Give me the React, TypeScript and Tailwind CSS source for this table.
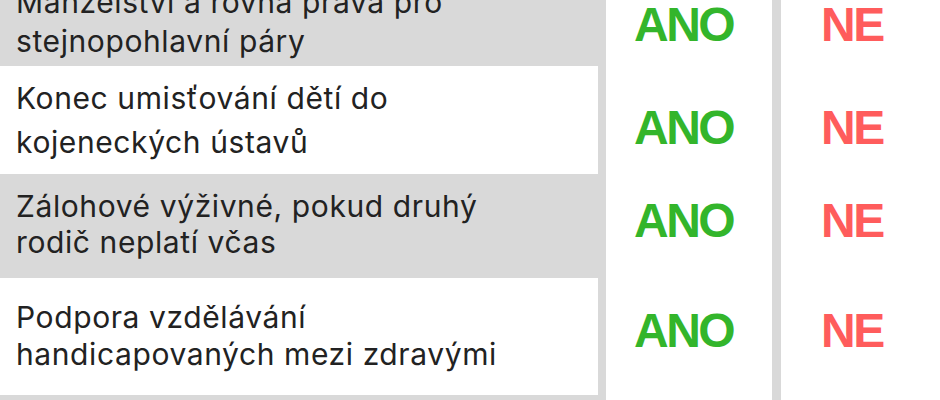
import React from "react";

const rows = [
  { lines: ["Manželství a rovná práva pro", "stejnopohlavní páry"], h: "h-[66px]", white: false, text: "-mt-[17px] leading-[39px]", mark: "pt-[1px]" },
  { lines: ["Konec umisťování dětí do", "kojeneckých ústavů"], h: "h-[108px]", white: true, text: "pt-[10px] leading-[44px]", mark: "pt-[38px]" },
  { lines: ["Zálohové výživné, pokud druhý", "rodič neplatí včas"], h: "h-[104px]", white: false, text: "pt-[14px] leading-[36px]", mark: "pt-[23px]" },
  { lines: ["Podpora vzdělávání", "handicapovaných mezi zdravými"], h: "h-[117px]", white: true, text: "pt-[21px] leading-[37px]", mark: "pt-[29px]" },
];

export default function App() {
  return (
    <div className="w-[940px] h-[400px] overflow-hidden bg-white flex flex-col">
      {rows.map((r, i) => (
        <div key={i} className={`flex shrink-0 ${r.h}`}>
          <div className="w-[606px] bg-[#d9d9d9] shrink-0 flex">
            <div className={`w-[598px] ${r.white ? "bg-white" : ""}`}>
              <div
                className={`pl-[16px] text-[30px] tracking-[0.6px] text-[#222222] ${r.text}`}
                style={{ fontFamily: "Inter, 'Noto Sans', sans-serif" }}
              >
                {r.lines.map((l, j) => (
                  <div key={j} className="whitespace-nowrap">{l}</div>
                ))}
              </div>
            </div>
          </div>
          <div className={`w-[166px] shrink-0 pl-[28px] ${r.mark}`}>
            <div className="text-[48px] leading-[48px] font-bold tracking-[-2.5px] text-[#33b52b]" style={{ fontFamily: "'Liberation Sans', Arial, sans-serif" }}>ANO</div>
          </div>
          <div className="w-[9px] shrink-0 bg-[#d9d9d9]" />
          <div className={`flex-1 pl-[40px] ${r.mark}`}>
            <div className="text-[48px] leading-[48px] font-bold tracking-[-2.5px] text-[#ff5c5c]" style={{ fontFamily: "'Liberation Sans', Arial, sans-serif" }}>NE</div>
          </div>
        </div>
      ))}
      <div className="flex flex-1">
        <div className="w-[606px] bg-[#d9d9d9] shrink-0" />
        <div className="w-[166px] shrink-0" />
        <div className="w-[9px] shrink-0 bg-[#d9d9d9]" />
        <div className="flex-1" />
      </div>
    </div>
  );
}
